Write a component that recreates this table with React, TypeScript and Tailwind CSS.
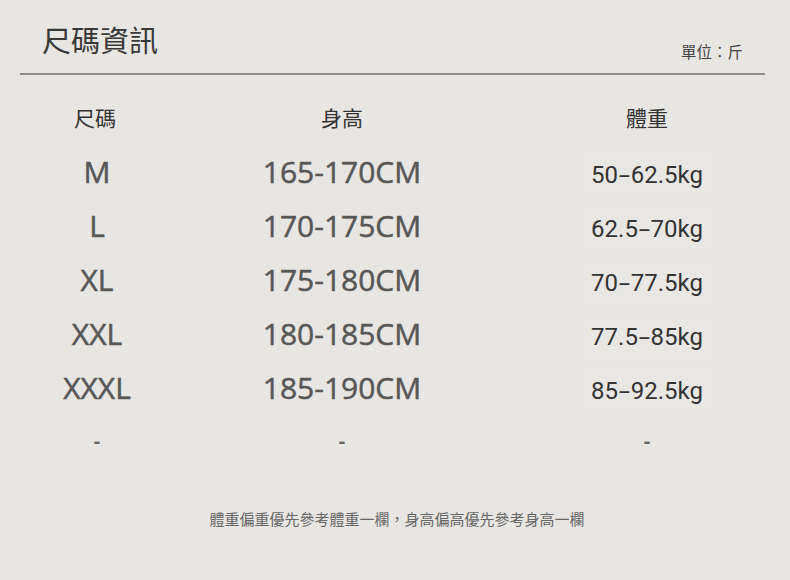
import React from "react";

const rows = [
  { size: "M", a: "50", b: "62.5kg", height: "165-170CM" },
  { size: "L", a: "62.5", b: "70kg", height: "170-175CM" },
  { size: "XL", a: "70", b: "77.5kg", height: "175-180CM" },
  { size: "XXL", a: "77.5", b: "85kg", height: "180-185CM" },
  { size: "XXXL", a: "85", b: "92.5kg", height: "185-190CM" },
];

const cjk = "font-['Noto_Sans_CJK_TC','Noto_Sans_CJK_SC',sans-serif]";
const open = "font-['Open_Sans','Noto_Sans',sans-serif]";
const rob = "font-['Roboto','Noto_Sans',sans-serif]";

export default function App() {
  return (
    <div className="w-[790px] h-[580px] bg-[#e8e6e2] flex flex-col">
      <div className="ml-5 w-[745px] h-[75px] border-b-2 border-[#8c8b89] flex justify-between items-start pt-[24px]">
        <span className={`${cjk} ml-[22px] text-[29px] leading-[30px] text-[#383838]`}>尺碼資訊</span>
        <span className={`${cjk} mr-[22px] mt-[19px] text-[15.5px] leading-[16px] text-[#444]`}>單位：斤</span>
      </div>
      <div className="ml-5 mt-[17px] grid grid-cols-[150px_344px_266px]">
        <div className={`${cjk} h-[52px] flex items-center justify-center text-[21px] text-[#333]`}>尺碼</div>
        <div className={`${cjk} h-[52px] flex items-center justify-center text-[21px] text-[#333]`}>身高</div>
        <div className={`${cjk} h-[52px] flex items-center justify-center text-[21px] text-[#333]`}>體重</div>
        {rows.map((r) => (
          <React.Fragment key={r.size}>
            <div className={`${open} h-[54px] flex items-center justify-center pl-[4px] text-[30px] text-[#575757] [-webkit-text-stroke:0.5px_#575757]`}>{r.size}</div>
            <div className={`${open} h-[54px] flex items-center justify-center text-[30px] text-[#575757] [-webkit-text-stroke:0.5px_#575757]`}>{r.height}</div>
            <div className="h-[54px] flex items-center justify-center">
              <span className={`${rob} mt-[8px] px-[10px] py-[6px] bg-[#e9e7e4] text-[24px] leading-[32px] text-[#333]`}>
                {r.a}
                <span className="inline-block scale-x-[1.7] mx-[3px]">-</span>
                {r.b}
              </span>
            </div>
          </React.Fragment>
        ))}
        <div className={`${open} h-[54px] flex items-center justify-center pl-[4px] text-[20px] font-bold text-[#666]`}>-</div>
        <div className={`${open} h-[54px] flex items-center justify-center text-[20px] font-bold text-[#666]`}>-</div>
        <div className={`${open} h-[54px] flex items-center justify-center text-[20px] font-bold text-[#666]`}>-</div>
      </div>
      <div className={`${cjk} mt-[41px] pl-[4px] text-center text-[15px] leading-[20px] text-[#666]`}>
        體重偏重優先參考體重一欄，身高偏高優先參考身高一欄
      </div>
    </div>
  );
}
